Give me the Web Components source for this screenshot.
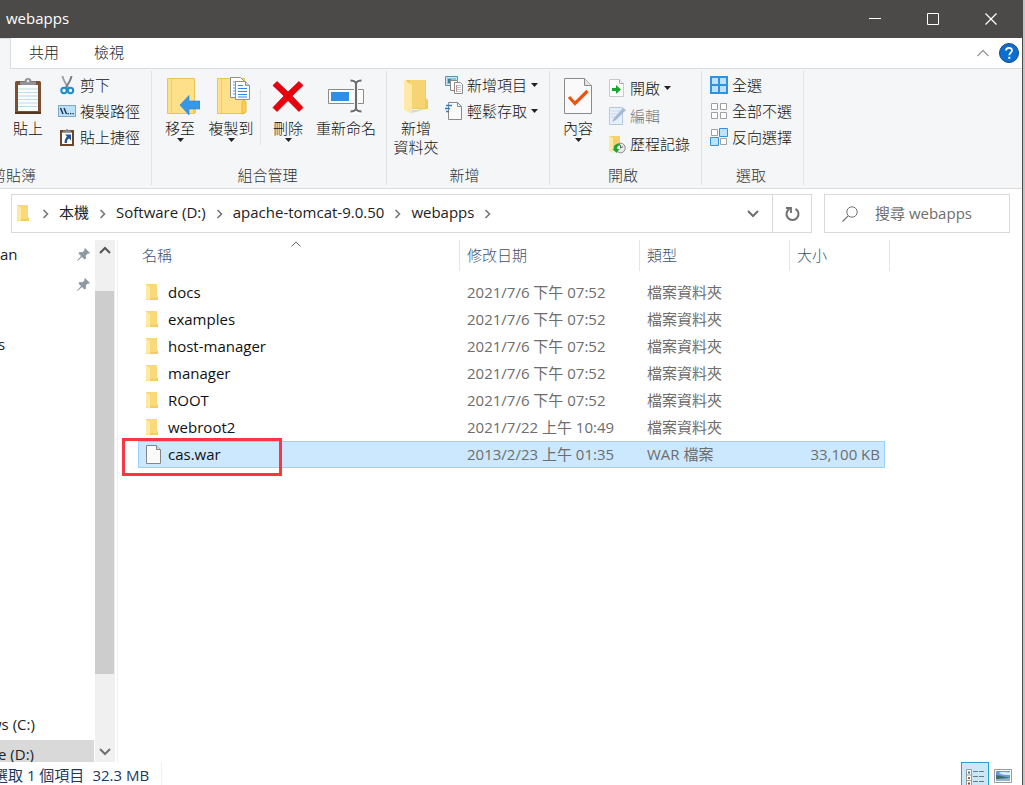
<!DOCTYPE html>
<html lang="zh-Hant">
<head>
<meta charset="utf-8">
<title>webapps</title>
<style>
  html, body { margin: 0; height: 100%; }
  body {
    background: #fff; color: #222; overflow: hidden;
    font-family: "Open Sans", "Noto Sans CJK TC", sans-serif;
    font-size: 15px; line-height: 20px;
  }
</style>
</head>
<body>
<explorer-window></explorer-window>

<script>
const RESET = `
  * { box-sizing: border-box; }
  button, input { font: inherit; color: inherit; background: none; border: 0; padding: 0; margin: 0; outline: 0; border-radius: 0; }
  ul, ol { list-style: none; margin: 0; padding: 0; }
  a { color: inherit; text-decoration: none; }
`;

class BaseElement extends HTMLElement {
  connectedCallback() {
    if (this.shadowRoot) return;
    this.attachShadow({ mode: 'open' }).innerHTML = `<style>${RESET}${this.styles()}</style>${this.render()}`;
  }
  styles() { return ''; }
  render() { return ''; }
}

const FOLDER = `<path d="M3 0h11v12l1 1v3H3z" fill="#f4cd62"/><path d="M5 0h9v14H5z" fill="#f9d978"/><path d="M3 0l4 3v14l-4-2z" fill="#ffe9a6"/>`;
const PAGE_SMALL = `<path d="M.5.5h10l4 4v14H.5z" fill="#fafafa" stroke="#858585"/><path d="M10.500.5v4h4" fill="#ddd" stroke="#858585"/>`;

const ICONS = {
  clipboard: [28, 38, `<rect x="1" y="4" width="26" height="33" rx="1.500" fill="#7a5032"/><path d="M1 35h26v2H1z" fill="#55361f"/>
    <path d="M4 8h20v26H4z" fill="#fcfcfc"/><path d="M4 12h20M4 15.500h20M4 19h20M4 22.500h20M4 26h20M4 29.500h20" stroke="#b9dcec" stroke-width="1.200"/>
    <path d="M6 8V4.500h4.500a3.500 3.500 0 0 1 7 0H22V8z" fill="#8f9397"/><circle cx="14" cy="4" r="1.300" fill="#e6e6e6"/>`],
  scissors: [18, 20, `<path d="M4.500 1C5 5 8 9 10.500 13" stroke="#9aa0a4" stroke-width="2" fill="none"/><path d="M13.500 1C13 5 10 9 7.500 13" stroke="#777d82" stroke-width="2" fill="none"/>
    <circle cx="6" cy="15.500" r="2.700" fill="none" stroke="#1d8ccc" stroke-width="2"/><circle cx="12.500" cy="15.500" r="2.700" fill="none" stroke="#1d8ccc" stroke-width="2"/>`],
  path: [18, 12, `<rect x=".5" y=".5" width="17" height="11" fill="#b9e1fa" stroke="#7fa8c4"/><path d="M2.500 3l2.500 6M6 3l2.500 6" stroke="#1c2e40" stroke-width="1.400"/><path d="M9.500 8h1.300v1.300H9.500zM12 8h1.300v1.300H12zM14.500 8h1.300v1.300h-1.300z" fill="#1c2e40"/>`],
  shortcut: [18, 18, `<rect x="2" y="2" width="14" height="16" fill="#6d4629"/><path d="M4 4.500h10V16H4z" fill="#fff"/><path d="M5 4.500V2.500h2.500a1.500 1.500 0 0 1 3 0H13v2z" fill="#868b90"/><path d="M7 6.500h6v6l-2-2c-2 1-2 2-2 4.500H6.500c0-3 1-5 2.500-6.500z" fill="#27539a"/>`],
  moveto: [40, 38, `<g transform="translate(6 0)"><path d="M1.500 1.500h27v35h-27z" fill="#ffe08a" stroke="#eac54f"/><path d="M5.500 2v34" stroke="#f0cf66"/><path d="M27 24h3v12h-3z" fill="#f4cd50"/><path d="M14 28l9-9.500V24h11v8H23v6z" fill="#3797e8" stroke="#2680cf" stroke-width=".6"/></g>`],
  copyto: [38, 38, `<g transform="translate(4 0)"><path d="M1.500 1.500h27v35h-27z" fill="#ffe08a" stroke="#eac54f"/><path d="M5.500 2v34" stroke="#f0cf66"/><path d="M26 37V25c0-2 4-2 4 0v10z" fill="#f9cf4e" stroke="#e5b93e"/>
    <path d="M14.500 .5h10l4 4v16h-14z" fill="#fff" stroke="#909090"/><path d="M17 5h6M17 8h6M17 11h3M17 14h3M17 17h3" stroke="#4f93d8"/><path d="M19.500 4.500h10l4 4v14h-14z" fill="#fff" stroke="#909090"/><path d="M29.500 4.500v4h4" fill="#ddd" stroke="#909090"/><path d="M22 8.500h5M22 11.500h9M22 14.500h9M22 17.500h9M22 20h9" stroke="#3b83e0" stroke-width="1.200"/></g>`],
  delete: [32, 38, `<path d="M1 8.500l4-4 11 10.500L27 4.500l4 4L20 19l11 11.500-4 4L16 23.500 5 34.500l-4-4L12 19z" fill="#e8000d" stroke="#c00510" stroke-width=".8"/>`],
  rename: [36, 38, `<path d="M.5 12.500h35v14H.5z" fill="#fbfbfb" stroke="#8b8b8b"/><path d="M3 15h18v9H3z" fill="#2f8fe6"/><path d="M23 3.500q4 0 5 3 1-3 5-3M23 35.500q4 0 5-3 1 3 5 3M28 6v27" stroke="#fff" stroke-width="4" fill="none"/><path d="M22.500 3.500q4.500 0 5.500 3 1-3 5.500-3M22.500 34.500q4.500 0 5.500-3 1 3 5.500 3M28 6v27" stroke="#6d6d6d" stroke-width="2.200" fill="none"/>`],
  newfolder: [28, 38, `<path d="M4 3h20v18l2 2v9H10z" fill="#f1cb62"/><path d="M8 3h15v28H8z" fill="#f6d472"/><path d="M2 3l8 5v29l-8-4z" fill="#ffe8a8"/><path d="M10 33l15-1-15 4z" fill="#d8d8d8"/>`],
  newitem: [18, 18, `<path d="M.5.5h12v9H.5z" fill="#cde6f5" stroke="#5a8fb0"/><path d="M2 2h9v6H2z" fill="#8fc4d8"/><path d="M3 3h3v4H3z" fill="#3f7f96"/><path d="M5.500 4.500h7v10h-7z" fill="#fff" stroke="#8a8a8a"/><path d="M9.500 6.500h6l2 2v9h-8z" fill="#fff" stroke="#8a8a8a"/><path d="M11.500 9v7" stroke="#e06c60"/><path d="M11 9.500h5M11 11.500h5M11 13.500h5M11 15.500h5" stroke="#a9b8c8" stroke-width=".8"/>`],
  easyaccess: [18, 20, `<path d="M3.500 1.500h9l4 4v13h-13z" fill="#fbfbfb" stroke="#8a8a8a"/><path d="M12.500 1.500v4h4" fill="none" stroke="#8a8a8a"/><path d="M1 4.500h6M0 7.500h5M1 10.500h3" stroke="#2d7fc0" stroke-width="1.300"/>`],
  properties: [30, 38, `<path d="M1.500 1.500h20l7 7v28h-27z" fill="#fafafa" stroke="#8b8b8b"/><path d="M21.500 1.500v7h7" fill="#e2e2e2" stroke="#8b8b8b"/><path d="M6 20l6 6.500L24.500 14" fill="none" stroke="#ee5410" stroke-width="3.200"/>`],
  open: [18, 20, `<path d="M1.500 1.500h10l4 4v13h-14z" fill="#fff" stroke="#c9c9c9"/><path d="M11.500 1.500v4h4" fill="#eee" stroke="#aaa"/><path d="M4 10h4V7l5 4.500-5 4.500v-3H4z" fill="#16a52e"/>`],
  edit: [18, 20, `<path d="M1.500 1.500h13v17h-13z" fill="#e6effa" stroke="#b5c6dd"/><path d="M3 5h9M3 8h7M3 11h6" stroke="#cbdaec"/><path d="M4 16l2-4L15 2l3 2L8 14z" fill="#a6b9d2"/>`],
  history: [18, 20, `<path d="M1 2h11v15H1z" fill="#f6d26c"/><path d="M1 2l4 2v15l-4-2z" fill="#ffe9a8"/><circle cx="12.500" cy="14" r="4.800" fill="#e9e9e9" stroke="#8b8b8b"/><path d="M12.500 11v3l2.500-1.500" stroke="#666" fill="none"/><path d="M12 10c-4-1-7 2-6 5H4.500l4 4 3-4H9.500c-1-2 1-4 2.500-3.500z" fill="#22a532"/>`],
  selectall: [18, 18, `<path d="M0 0h18v18H0z" fill="#2f92e2"/><path d="M2 2h6v6H2zM10 2h6v6h-6zM2 10h6v6H2zM10 10h6v6h-6z" fill="#bfe2fb"/>`],
  selectnone: [18, 18, `<path d="M1.500 1.500h6v6h-6zM10.500 1.500h6v6h-6zM1.500 10.500h6v6h-6zM10.500 10.500h6v6h-6z" fill="#fff" stroke="#a0a0a0"/>`],
  invert: [18, 18, `<path d="M1.500 1.500h6v6h-6zM10.500 10.500h6v6h-6z" fill="#fff" stroke="#a0a0a0"/><path d="M9.500.5h8v8h-8zM.5 9.500h8v8h-8z" fill="#bfe2fb" stroke="#2f92e2"/>`],
  folder: [18, 18, FOLDER],
  file: [15, 19, PAGE_SMALL],
  caret: [7, 4, `<path d="M0 0h7L3.500 4z" fill="#222"/>`],
  chevright: [7, 10, `<path d="M1.500 1l4 4-4 4" fill="none" stroke="#767676" stroke-width="1.600"/>`],
  chevdown: [12, 8, `<path d="M1 1l5 5 5-5" fill="none" stroke="#6f6f6f" stroke-width="2"/>`],
  chevup: [12, 8, `<path d="M1 7l5-5 5 5" fill="none" stroke="#555" stroke-width="2"/>`],
  collapse: [12, 8, `<path d="M.5 7L6 1.500 11.500 7" fill="none" stroke="#9a9a9a" stroke-width="1.400"/>`],
  sort: [10, 6, `<path d="M.5 5.500L5 1l4.500 4.500" fill="none" stroke="#666"/>`],
  help: [20, 20, `<circle cx="10" cy="10" r="9.500" fill="#0a6fd0" stroke="#17477c"/><path d="M7 7.500c0-3.500 6-3.500 6 0 0 2-2.700 2.300-2.700 4.800" fill="none" stroke="#fff" stroke-width="1.800"/><path d="M9.300 13.800h2v2h-2z" fill="#fff"/>`],
  minimize: [12, 12, `<path d="M0 5.500h12" stroke="#fff"/>`],
  maximize: [12, 12, `<path d="M.5.5h11v11H.5z" fill="none" stroke="#fff" stroke-width="1"/>`],
  close: [12, 12, `<path d="M.5.5l11 11M11.500.5l-11 11" stroke="#fff" stroke-width="1.200"/>`],
  refresh: [15, 15, `<path d="M10.500 2.800a6 6 0 1 1-6 0" fill="none" stroke="#6f6f6f" stroke-width="2"/><path d="M1 2h5v5" fill="none" stroke="#6f6f6f" stroke-width="1.800"/>`],
  search: [16, 16, `<circle cx="10" cy="6" r="5.200" fill="none" stroke="#707070"/><path d="M6.200 9.800L.5 15.500" stroke="#707070" stroke-width="1.200"/>`],
  pin: [13, 13, `<path d="M8 0l5 5-1.500.7-.7-.2-2 2 .2 3-1.500 1L5 9l-4.500 4L0 12.500 4 8 1.500 5.500l1-1.500 3 .2 2-2L7.300 1z" fill="#8d99a3"/>`],
  details: [18, 18, `<path d="M.5.500h5v17H.5z" fill="#fff" stroke="#999"/><path d="M1 6h5M1 11.500h5" stroke="#999"/><path d="M2 2.500h2v2H2z" fill="#3778a0"/><path d="M2 8h2v2H2z" fill="#a36c30"/><path d="M2 13.500h2v2H2z" fill="#c22d22"/><path d="M7 2.500h5M13 2.500h5M7 7.500h5M13 7.500h5M7 12.500h5M13 12.500h5" stroke="#6f7a80"/>`],
  picture: [18, 14, `<path d="M.5.5h17v13H.5z" fill="#fff" stroke="#9a9a9a"/><path d="M2 2h14v10H2z" fill="#5c9ee0"/><path d="M5 4c3-2 7 0 11-1v3c-5 0-8 0-11-2z" fill="#dceefb"/><path d="M2 6l5 1 9 2v3H2z" fill="#3b6c66"/><path d="M2 10l14-1v3H2z" fill="#8fb4cf"/>`]
};

customElements.define('ui-icon', class extends BaseElement {
  styles() { return `:host{display:block;flex:none} svg{display:block}`; }
  render() {
    const [w, h, body] = ICONS[this.getAttribute('name')];
    return `<svg width="${w}" height="${h}" viewBox="0 0 ${w} ${h}" aria-hidden="true">${body}</svg>`;
  }
});

customElements.define('title-bar', class extends BaseElement {
  styles() { return `
    :host{display:flex;align-items:center;justify-content:space-between;height:38px;background:#4c4a48;color:#fff;padding:0 2px 0 6px}
    h1{font-size:15px;font-weight:400;margin:0;padding-bottom:2px}
    div{display:flex;height:100%} button{width:58px;display:grid;place-items:center}`; }
  render() { return `<h1><slot></slot></h1><div>
    <button aria-label="最小化"><ui-icon name="minimize"></ui-icon></button>
    <button aria-label="最大化"><ui-icon name="maximize"></ui-icon></button>
    <button aria-label="關閉"><ui-icon name="close"></ui-icon></button></div>`; }
});

customElements.define('ribbon-tabs', class extends BaseElement {
  styles() { return `
    :host{display:flex;height:31px;border-bottom:1px solid #dadbdc;background:#fff;font-weight:300;color:#222}
    .home{width:11px;margin-bottom:-1px;background:#f5f6f7;border-right:1px solid #dadbdc;border-top:1px solid #dadbdc}
    nav{display:flex;gap:1px;padding-left:1px;flex:1} nav button{padding:0 17px 2px}
    .tools{display:flex;align-items:center;gap:10px;padding-right:3px}`; }
  render() { return `<button class="home" aria-label="常用"></button><nav><button>共用</button><button>檢視</button></nav>
    <div class="tools"><button aria-label="最小化功能區"><ui-icon name="collapse"></ui-icon></button><button aria-label="說明"><ui-icon name="help"></ui-icon></button></div>`; }
});

customElements.define('ribbon-button', class extends BaseElement {
  styles() { return `
    :host{display:block;flex:none}
    button{display:flex;align-items:center;gap:4px;height:26px;white-space:nowrap}
    .pic{width:18px;display:grid;place-items:center;flex:none}
    :host([tall]) button{height:28px}
    :host([large]) button{flex-direction:column;gap:0;height:auto;min-width:44px;line-height:19px;padding-top:6px}
    :host([large]) .pic{width:auto;height:38px;margin-bottom:4px}
    :host([disabled]) .label{color:#777}`; }
  render() { return `<button ${this.hasAttribute('disabled') ? 'disabled' : ''}><span class="pic"><ui-icon name="${this.getAttribute('icon')}"></ui-icon></span>
    <span class="label"><slot></slot></span>${this.hasAttribute('menu') ? '<ui-icon class="caret" name="caret"></ui-icon>' : ''}</button>`; }
});

customElements.define('ribbon-group', class extends BaseElement {
  styles() { return `
    :host{display:flex;flex-direction:column;flex:none;margin:2px 0 3px;border-right:1px solid #e2e3e4;padding:0 11px 0 6px}
    .items{display:flex;flex:1;align-items:flex-start;gap:var(--gap,2px)}
    h2{font-size:15px;font-weight:inherit;line-height:20px;margin:0;text-align:center;color:#333}`; }
  render() { return `<div class="items"><slot></slot></div><h2>${this.getAttribute('label')}</h2>`; }
});

customElements.define('ribbon-bar', class extends BaseElement {
  styles() { return `
    :host{display:flex;height:120px;flex:none;background:#f5f6f7;border-bottom:1px solid #dadbdc;overflow:hidden;font-weight:300;color:#111}
    .clip{margin-left:-119px;--gap:8px} .clip > ribbon-button{margin-left:119px}
    .col{display:flex;flex-direction:column;margin-top:1px}
    .org{padding-right:9px} .new{padding-left:4px;--gap:4px} .open{--gap:8px} .open .col{margin-top:3px} .sel{padding-left:8px}
    .rule{width:1px;height:56px;background:#e2e3e4;margin-top:18px}
    .del{width:50px;display:flex;justify-content:center} .copy{width:54px;display:flex;justify-content:center}
    .ren{width:62px;display:flex;justify-content:center} .nf{width:50px;display:flex;justify-content:center}`; }
  render() { return `
    <ribbon-group class="clip" label="剪貼簿"><ribbon-button large icon="clipboard">貼上</ribbon-button>
      <div class="col"><ribbon-button icon="scissors">剪下</ribbon-button><ribbon-button icon="path">複製路徑</ribbon-button><ribbon-button icon="shortcut">貼上捷徑</ribbon-button></div></ribbon-group>
    <ribbon-group class="org" label="組合管理"><ribbon-button large menu icon="moveto">移至</ribbon-button><ribbon-button class="copy" large menu icon="copyto">複製到</ribbon-button>
      <div class="rule"></div><ribbon-button class="del" large menu icon="delete">刪除</ribbon-button><ribbon-button class="ren" large icon="rename">重新命名</ribbon-button></ribbon-group>
    <ribbon-group class="new" label="新增"><ribbon-button class="nf" large icon="newfolder">新增<br>資料夾</ribbon-button>
      <div class="col"><ribbon-button menu icon="newitem">新增項目</ribbon-button><ribbon-button menu icon="easyaccess">輕鬆存取</ribbon-button></div></ribbon-group>
    <ribbon-group class="open" label="開啟"><ribbon-button large menu icon="properties">內容</ribbon-button>
      <div class="col"><ribbon-button tall menu icon="open">開啟</ribbon-button><ribbon-button tall disabled icon="edit">編輯</ribbon-button><ribbon-button tall icon="history">歷程記錄</ribbon-button></div></ribbon-group>
    <ribbon-group class="sel" label="選取"><div class="col"><ribbon-button icon="selectall">全選</ribbon-button><ribbon-button icon="selectnone">全部不選</ribbon-button><ribbon-button icon="invert">反向選擇</ribbon-button></div></ribbon-group>`; }
});

customElements.define('address-bar', class extends BaseElement {
  styles() { return `
    :host{display:flex;gap:12px;padding:5px 12px 7px 11px;flex:none}
    .box{display:flex;border:1px solid #d9d9d9;height:39px;flex:1}
    ol{display:flex;flex:1;align-items:center;padding-left:2px}
    li{display:flex;align-items:center;gap:10px;margin-right:10px} li a{padding-bottom:3px}
    .drop{width:38px;display:grid;place-items:center} .go{width:39px;border-left:1px solid #d9d9d9;display:grid;place-items:center}
    .search{display:flex;align-items:center;border:1px solid #d9d9d9;height:39px;width:186px;padding-left:17px;gap:17px}
    input{flex:1;min-width:0;height:100%;padding-bottom:2px} input::placeholder{color:#6d6d6d;opacity:1}`; }
  render() {
    const crumbs = ['本機', 'Software (D:)', 'apache-tomcat-9.0.50', 'webapps'];
    return `<div class="box"><ol><li><ui-icon name="folder"></ui-icon><ui-icon name="chevright"></ui-icon></li>
      ${crumbs.map(c => `<li><a href="#">${c}</a><ui-icon name="chevright"></ui-icon></li>`).join('')}</ol>
      <button class="drop" aria-label="先前的位置"><ui-icon name="chevdown"></ui-icon></button><button class="go" aria-label="重新整理"><ui-icon name="refresh"></ui-icon></button></div>
      <label class="search"><ui-icon name="search"></ui-icon><input type="text" aria-label="搜尋" placeholder="搜尋 webapps"></label>`; }
});

customElements.define('nav-pane', class extends BaseElement {
  styles() { return `
    :host{display:flex;flex:none;width:118px;border-right:1px solid #f0f0f0;overflow:hidden}
    .tree{display:flex;flex-direction:column;width:94px;margin-right:1px}
    li{display:flex;align-items:center;justify-content:space-between;height:30px;padding:0 4px 2px 0}
    .drives{margin:auto 0 -8px} .current{background:#d9d9d9} .cut{margin-left:-10px} .edge{margin-left:-2px}
    .bar{display:grid;width:20px;grid-template-rows:20px 31fr 383fr 68fr 20px;background:#f0f0f0;place-items:center}
    .thumb{grid-row:3;background:#cdcdcd;width:19px;height:100%;justify-self:start} .down{grid-row:5}`; }
  render() { return `<div class="tree"><ul><li><a href="#">an</a><ui-icon name="pin"></ui-icon></li><li><span></span><ui-icon name="pin"></ui-icon></li><li></li><li><a class="edge" href="#">s</a></li></ul>
    <ul class="drives"><li><a class="cut" href="#">ws (C:)</a></li><li class="current"><a class="edge" href="#">e (D:)</a></li></ul></div>
    <div class="bar"><button aria-label="向上捲動"><ui-icon name="chevup"></ui-icon></button><div class="thumb"></div><button class="down" aria-label="向下捲動"><ui-icon name="chevdown"></ui-icon></button></div>`; }
});

customElements.define('file-list', class extends BaseElement {
  styles() { return `
    :host{display:block;flex:1;padding-left:20px;min-width:0}
    table{border-collapse:separate;border-spacing:0;table-layout:fixed;width:752px}
    th{height:31px;padding:0 7px 2px;text-align:left;font-weight:300;color:#3d5270;border-right:1px solid #e5e5e5;position:relative}
    th:first-child{padding-left:4px}
    .sort{position:absolute;left:153px;top:1px}
    tbody::before{content:"";display:table-row;height:8px}
    td{height:27px;padding:0 7px 2px;color:#6d6d6d;border:solid transparent;border-width:1px 0;line-height:20px;white-space:nowrap}
    td:first-child{border-left-width:1px;color:#111;position:relative}
    .size{text-align:right;padding-right:4px;border-right-width:1px}
    .name{display:flex;align-items:center} .name i{width:22px;font-style:normal;padding-top:2px} .name .folder{margin:0 3px 0 -3px}
    .selected td:not(.pad){background:#cce8ff;border-color:#99d1ff} td.pad{padding:0}
    .mark{position:absolute;left:-17px;top:-4px;width:160px;height:38px;border:3px solid #fb3640;pointer-events:none}`; }
  render() {
    const rows = [['docs','2021/7/6 下午 07:52'],['examples','2021/7/6 下午 07:52'],['host-manager','2021/7/6 下午 07:52'],['manager','2021/7/6 下午 07:52'],
      ['ROOT','2021/7/6 下午 07:52'],['webroot2','2021/7/22 上午 10:49'],['cas.war','2013/2/23 上午 01:35','WAR 檔案','33,100 KB']];
    return `<table><colgroup><col style="width:322px"><col style="width:180px"><col style="width:150px"><col style="width:95px"><col style="width:5px"></colgroup>
      <thead><tr><th>名稱<ui-icon class="sort" name="sort"></ui-icon></th><th>修改日期</th><th>類型</th><th colspan="2">大小</th></tr></thead>
      <tbody>${rows.map(([n, d, t, s]) => `<tr class="${s ? 'selected' : ''}"><td><span class="name"><i class="${s ? '' : 'folder'}"><ui-icon name="${s ? 'file' : 'folder'}"></ui-icon></i>${n}</span>${s ? '<span class="mark"></span>' : ''}</td><td>${d}</td><td>${t || '檔案資料夾'}</td><td class="size">${s || ''}</td><td class="pad"></td></tr>`).join('')}</tbody></table>`; }
});

customElements.define('status-bar', class extends BaseElement {
  styles() { return `
    :host{display:flex;height:23px;flex:none;justify-content:space-between;color:#1e395b;overflow:hidden}
    .info{display:flex;gap:8px;margin-left:-7px;line-height:27px;white-space:nowrap;padding-right:12px;border-right:1px solid #f0f0f0}
    .views{display:flex;gap:5px;padding-right:10px}
    button{display:grid;place-items:start center;padding-top:7px}
    .on{width:28px;height:28px;background:#cbe8f6;border:1px solid #26a0da;padding-top:6px}`; }
  render() { return `<div class="info"><span>選取 1 個項目</span><span>32.3 MB</span></div>
    <div class="views"><button class="on" aria-label="詳細資料"><ui-icon name="details"></ui-icon></button><button aria-label="大圖示"><ui-icon name="picture"></ui-icon></button></div>`; }
});

customElements.define('explorer-window', class extends BaseElement {
  styles() { return `
    :host{display:flex;height:100vh;background:#c4c4c4}
    .win{display:flex;flex-direction:column;flex:1;min-width:0;margin-right:2px;background:#fff;border-right:1px solid #4c4a48}
    main{display:flex;flex:1;min-height:0}`; }
  render() { return `<div class="win"><title-bar>webapps</title-bar><ribbon-tabs></ribbon-tabs><ribbon-bar></ribbon-bar><address-bar></address-bar>
    <main><nav-pane></nav-pane><file-list></file-list></main><status-bar></status-bar></div>`; }
});
</script>
</body>
</html>
